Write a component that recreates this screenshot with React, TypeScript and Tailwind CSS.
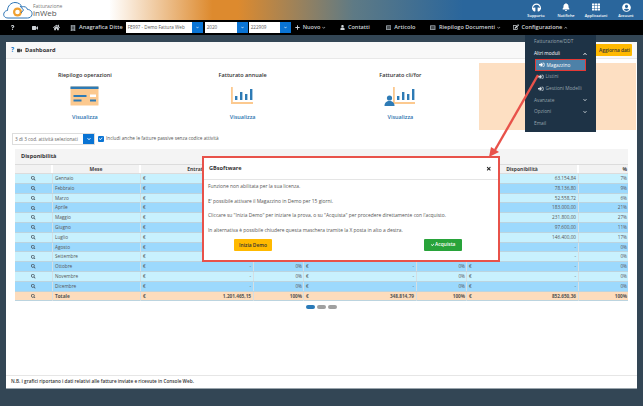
import React from "react";
import { FaHeadphones, FaBell, FaTh, FaUserCircle, FaVideo, FaHome, FaBuilding, FaPlus, FaUser, FaListAlt, FaEdit, FaSearch, FaCheck, FaTimes, FaSignInAlt, FaChevronDown, FaChevronUp, FaQuestion } from "react-icons/fa";

const font = { fontFamily: '"Open Sans", sans-serif' };

const months = [
  { name: "Gennaio", disp: "63.154,84", pct: "7%" },
  { name: "Febbraio", disp: "78.136,80", pct: "9%" },
  { name: "Marzo", disp: "52.558,72", pct: "6%" },
  { name: "Aprile", disp: "183.000,00", pct: "21%" },
  { name: "Maggio", disp: "231.800,00", pct: "27%" },
  { name: "Giugno", disp: "97.600,00", pct: "11%" },
  { name: "Luglio", disp: "146.400,00", pct: "17%" },
  { name: "Agosto", disp: "-", pct: "0%" },
  { name: "Settembre", disp: "-", pct: "0%" },
  { name: "Ottobre", disp: "-", pct: "0%" },
  { name: "Novembre", disp: "-", pct: "0%" },
  { name: "Dicembre", disp: "-", pct: "0%" },
];

const cols = "grid grid-cols-[38px_88px_113px_50px_113px_50px_112px_49px]";

function Logo() {
  return (
    <svg width="32" height="20" viewBox="0 0 32 20" fill="none">
      <path d="M6 18C2.5 18 1 15.5 2 13C2.8 11 4.5 10.5 5.5 10.5C5.5 6 9 2.5 13 2.5C16.5 2.5 19 4.5 20 7C22 6 25 7 25.5 9.5C28.5 9.5 30.5 12 30 14.5C29.5 17 27.5 18 25.5 18H6Z" stroke="#2e75b6" strokeWidth="1" />
      <circle cx="15.5" cy="12" r="4.5" fill="#f0a030" />
      <circle cx="15.5" cy="12" r="2.3" fill="#fff" />
      <path d="M18 6L21.5 10L19 13" stroke="#2e75b6" strokeWidth="1" />
    </svg>
  );
}

function Bars({ person }: { person?: boolean }) {
  return (
    <svg width="32" height="20" viewBox="0 0 32 20">
      <rect x={person ? 9 : 4} y="1" width="1.8" height="17" fill="#fcc98f" />
      <rect x={person ? 9 : 4} y="16" width={person ? 22 : 22} height="2" fill="#fcc98f" />
      <g fill="#2e7bb5" transform={person ? "translate(5 0)" : ""}>
        <rect x="8" y="10" width="2.4" height="4" />
        <rect x="13" y="6" width="2.4" height="8" />
        <rect x="18" y="8" width="2.4" height="6" />
        <rect x="23" y="3" width="2.4" height="11" />
      </g>
      {person && (
        <g fill="#2e7bb5">
          <circle cx="5.5" cy="12" r="2.6" />
          <path d="M0.5 20C0.5 16.5 2.5 15 5.5 15C8.5 15 10.5 16.5 10.5 20Z" />
        </g>
      )}
    </svg>
  );
}

function CardIcon() {
  return (
    <svg width="29" height="20" viewBox="0 0 29 20">
      <rect x="0.5" y="0.5" width="28" height="19" rx="0.5" fill="#fcc98f" />
      <rect x="0.5" y="0.5" width="28" height="2.5" fill="#2e7bb5" />
      <rect x="3.5" y="9" width="13" height="2" fill="#2e7bb5" />
      <rect x="3.5" y="13.5" width="8" height="2" fill="#2e7bb5" />
      <rect x="20" y="8.5" width="6" height="2.5" fill="#fff" />
      <rect x="20" y="13.5" width="6" height="2" fill="#2e7bb5" />
    </svg>
  );
}

function Summary({ title, icon }: { title: string; icon: React.ReactNode }) {
  return (
    <div className="flex flex-col items-center pt-[12px]">
      <div className="h-[9px] text-[5.5px] leading-[9px] font-semibold text-[#333]">{title}</div>
      <div className="mt-[6px] h-[20px] flex items-center">{icon}</div>
      <div className="mt-[7px] text-[5.5px] leading-[9px] font-semibold text-[#2f75b0]">Visualizza</div>
    </div>
  );
}

function Combo({ text, w }: { text: string; w: string }) {
  return (
    <div className={`flex h-[11px] ${w}`}>
      <div className="flex-1 bg-white text-[4.6px] leading-[11px] pl-[2px] text-[#555] whitespace-nowrap overflow-hidden">{text}</div>
      <div className="w-[11px] bg-[#0a74d4] flex items-center justify-center">
        <FaChevronDown className="text-white" size={3} />
      </div>
    </div>
  );
}

function NavItem({ icon, label, chevron, gap }: { icon: React.ReactNode; label: string; chevron?: "down" | "up"; gap: string }) {
  return (
    <div className={`flex items-center ${gap} text-[#cfd4d8]`}>
      {icon}
      <span className="ml-[3px] text-[5.6px] font-semibold whitespace-nowrap">{label}</span>
      {chevron === "down" && <FaChevronDown className="ml-[2px]" size={3.5} />}
      {chevron === "up" && <FaChevronUp className="ml-[2px]" size={3.5} />}
    </div>
  );
}

function TopIcon({ icon, label }: { icon: React.ReactNode; label: string }) {
  return (
    <div className="w-[30px] flex flex-col items-center text-white">
      <div className="h-[12px] flex items-center">{icon}</div>
      <div className="text-[3.9px] leading-[6px] font-semibold whitespace-nowrap">{label}</div>
    </div>
  );
}

function Row({ name, bg, entrate, entPct, uscite, uscPct, disp, pct, bold }: { name: string; bg: string; entrate?: string; entPct?: string; uscite?: string; uscPct?: string; disp: string; pct: string; bold?: boolean }) {
  const w = bold ? "font-bold" : "";
  return (
    <div className={`${cols} h-[9.8px] ${bg} border-b border-[#bcd4df] text-[4.7px] leading-[9px] text-[#555] ${w}`}>
      <div className="flex items-center justify-center border-r border-[#d5dfe3]">
        <FaSearch className="text-[#44505a]" size={4.5} />
      </div>
      <div className="pl-[2px] border-r border-[#d5dfe3]">{name}</div>
      <div className="flex justify-between px-[2px] border-r border-[#d5dfe3]"><span>€</span><span>{entrate}</span></div>
      <div className="text-right pr-[1px] border-r border-[#d5dfe3]">{entPct}</div>
      <div className="flex justify-between px-[2px] border-r border-[#d5dfe3]"><span>€</span><span>{uscite}</span></div>
      <div className="text-right pr-[1px] border-r border-[#d5dfe3]">{uscPct}</div>
      <div className="flex justify-between px-[2px] border-r border-[#d5dfe3]"><span>€</span><span>{disp}</span></div>
      <div className="text-right pr-[1px]">{pct}</div>
    </div>
  );
}

function MenuItem({ label, chevron, sub, active }: { label: string; chevron?: "down" | "up"; sub?: boolean; active?: boolean }) {
  return (
    <div className={`flex items-center h-[11.7px] text-[4.8px] ${sub ? "pl-[13px]" : "pl-[9px]"} pr-[9px] ${active ? "text-white" : "text-[#97a3ad]"}`}>
      {sub && <FaSignInAlt className="mr-[2px] text-[#d5dce2]" size={5.5} />}
      <span className="flex-1 whitespace-nowrap">{label}</span>
      {chevron === "down" && <FaChevronDown className="text-[#c8d0d6]" size={4} />}
      {chevron === "up" && <FaChevronUp className="text-white" size={4} />}
    </div>
  );
}

export default function App() {
  return (
    <div className="relative w-[643px] h-[406px] overflow-hidden bg-[#334655] flex flex-col" style={font}>
      {/* Header */}
      <div className="h-[20px] flex justify-between items-start bg-[linear-gradient(90deg,#ffffff_17%,#dd8a2e_33%,#dd8a2e_37%,#5e7a85_55%,#2a669c_72%,#2a669c_100%)]">
        <div className="flex items-center pl-[2px] h-[20px]">
          <Logo />
          <div className="-ml-[1px] flex flex-col">
            <span className="text-[5px] leading-[6px] text-[#777]">Fatturazione</span>
            <span className="text-[8px] leading-[8px] text-[#555]">inWeb</span>
          </div>
        </div>
        <div className="flex pr-[2px] pt-[1px]">
          <TopIcon icon={<FaHeadphones size={9} />} label="Supporto" />
          <TopIcon icon={<FaBell size={8} />} label="Notifiche" />
          <TopIcon icon={<FaTh size={8} />} label="Applicazioni" />
          <TopIcon icon={<FaUserCircle size={9} />} label="Account" />
        </div>
      </div>

      {/* Nav */}
      <div className="h-[15px] bg-black flex items-center">
        <FaQuestion className="ml-[10px] text-[#cfd4d8]" size={5} />
        <FaVideo className="ml-[17px] text-[#cfd4d8]" size={6} />
        <FaHome className="ml-[15px] text-[#cfd4d8]" size={7} />
        <FaBuilding className="ml-[10px] text-[#8c949a]" size={6} />
        <span className="ml-[3px] text-[5.6px] font-semibold text-[#cfd4d8] whitespace-nowrap">Anagrafica Ditte</span>
        <div className="ml-[3px]"><Combo text="FE997 - Demo Fattura Web" w="w-[77px]" /></div>
        <div className="ml-[2px]"><Combo text="2020" w="w-[43px]" /></div>
        <div className="ml-[1px]"><Combo text="222909" w="w-[42px]" /></div>
        <NavItem gap="ml-[4px]" icon={<FaPlus size={5} />} label="Nuovo" chevron="down" />
        <NavItem gap="ml-[14px]" icon={<FaUser size={5} />} label="Contatti" />
        <NavItem gap="ml-[16px]" icon={<FaListAlt className="text-[#8c949a]" size={5.5} />} label="Articolo" />
        <NavItem gap="ml-[15px]" icon={<FaListAlt className="text-[#8c949a]" size={5.5} />} label="Riepilogo Documenti" chevron="down" />
        <NavItem gap="ml-[12px]" icon={<FaEdit size={6} />} label="Configurazione" chevron="up" />
      </div>

      {/* Main */}
      <div className="px-[6px] pt-[7px]">
        <div className="h-[347px] bg-white flex flex-col border-b border-[#9aa5ad]">
          <div className="h-[17px] bg-[#f8f8f8] border-b border-[#e8e8e8] flex items-center justify-between pl-[5px] pr-[5px]">
            <div className="flex items-center text-[#333]">
              <span className="text-[6.5px] font-bold text-[#1b78c8]">?</span>
              <FaVideo className="ml-[3px] text-[#444]" size={5} />
              <span className="ml-[3px] text-[5.6px] font-bold">Dashboard</span>
            </div>
            <div className="h-[12px] w-[40px] rounded-[1px] bg-[#ffb900] text-[4.8px] font-semibold leading-[12px] text-right pr-[2px] text-[#333]">Aggiorna dati</div>
          </div>

          <div className="grid grid-cols-4 h-[71px]">
            <Summary title="Riepilogo operazioni" icon={<CardIcon />} />
            <Summary title="Fatturato annuale" icon={<Bars />} />
            <Summary title="Fatturato cli/for" icon={<Bars person />} />
            <div className="mt-[4px] mr-[1px] h-[67px] bg-[#fddfc2]" />
          </div>

          <div className="flex items-center h-[13px] pl-[6px] mt-[2px]">
            <div className="flex h-[12px] w-[83px] border border-[#ddd] bg-white">
              <div className="flex-1 text-[4.7px] leading-[10px] pl-[2px] text-[#666] whitespace-nowrap">3 di 3 cod. attività selezionati</div>
              <div className="w-[11px] bg-[#0a74d4] flex items-center justify-center"><FaChevronDown className="text-white" size={4} /></div>
            </div>
            <div className="ml-[3px] w-[6px] h-[6px] rounded-[1px] bg-[#0a74d4] flex items-center justify-center"><FaCheck className="text-white" size={3.5} /></div>
            <span className="ml-[2px] text-[4.7px] text-[#555] whitespace-nowrap">Includi anche le fatture passive senza codice attività</span>
          </div>

          <div className="mt-[4px] ml-[9px] w-[613px]">
            <div className="h-[15px] bg-[#f4f4f4] flex items-center pl-[6px] text-[5.6px] font-bold text-[#333]">Disponibilità</div>
            <div className={`${cols} h-[10px] bg-[#f2f2f2] border-y border-[#dcdcdc] text-[5px] leading-[8px] font-bold text-[#444]`}>
              <div className="border-r-2 border-white" />
              <div className="text-center border-r-2 border-white">Mese</div>
              <div className="text-center border-r-2 border-white">Entrate</div>
              <div className="text-right pr-[1px] border-r-2 border-white">%</div>
              <div className="text-center border-r-2 border-white">Uscite</div>
              <div className="text-right pr-[1px] border-r-2 border-white">%</div>
              <div className="text-center border-r-2 border-white">Disponibilità</div>
              <div className="text-right pr-[1px]">%</div>
            </div>
            {months.map((m, i) => (
              <Row
                key={m.name}
                name={m.name}
                bg={i % 2 === 0 ? "bg-[#c8f1fe]" : "bg-[#9cd9fd]"}
                entrate={i > 7 ? "-" : ""}
                entPct={i > 7 ? "0%" : ""}
                uscite={i > 7 ? "-" : ""}
                uscPct={i > 7 ? "0%" : ""}
                disp={m.disp}
                pct={m.pct}
              />
            ))}
            <Row name="Totale" bg="bg-[#fddcbc]" entrate="1.201.465,15" entPct="100%" uscite="348.814,79" uscPct="100%" disp="852.650,36" pct="100%" bold />
          </div>

          <div className="flex justify-center gap-[2px] mt-[4px]">
            <div className="w-[9px] h-[4px] rounded-full bg-[#2a7ab8]" />
            <div className="w-[9px] h-[4px] rounded-full bg-[#a0a0a0]" />
            <div className="w-[9px] h-[4px] rounded-full bg-[#a0a0a0]" />
          </div>

          <div className="mt-auto h-[13px] border-t border-[#e6e6e6] flex items-center pl-[5px] text-[4.7px] font-semibold text-[#333]">
            N.B. i grafici riportano i dati relativi alle fatture inviate e ricevute in Console Web.
          </div>
        </div>
      </div>

      {/* Configurazione menu */}
      <div className="absolute left-[525px] top-[35px] w-[71px] h-[97px] bg-[#1e3346] pt-[1px]">
        <MenuItem label="Fatturazione/DDT" />
        <MenuItem label="Altri moduli" chevron="up" active />
        <div className="mx-[10px] border border-[#e53935] bg-[#4d81a8]">
          <div className="flex items-center h-[9.7px] pl-[3px] text-[4.8px] text-white">
            <FaSignInAlt className="mr-[2px]" size={5.5} />
            Magazzino
          </div>
        </div>
        <MenuItem label="Listini" sub />
        <MenuItem label="Gestioni Modelli" sub />
        <MenuItem label="Avanzate" chevron="down" />
        <MenuItem label="Opzioni" chevron="down" />
        <MenuItem label="Email" />
      </div>

      {/* Arrow */}
      <svg className="absolute left-0 top-0 pointer-events-none" width="643" height="406">
        <line x1="538" y1="75" x2="495" y2="150" stroke="#e8524a" strokeWidth="2.4" />
        <polygon points="489,157 491,147 499,152" fill="#e8524a" />
      </svg>

      {/* Modal */}
      <div className="absolute left-[202px] top-[156px] w-[298px] h-[106px] bg-white border-2 border-[#e8524a] flex flex-col">
        <div className="h-[22px] border-b border-[#e5e5e5] flex items-center justify-between pl-[5px] pr-[7px]">
          <span className="text-[5.6px] font-bold text-[#333]">GBsoftware</span>
          <FaTimes className="text-[#222]" size={5.5} />
        </div>
        <div className="pl-[4px] pt-[2px] text-[4.9px] text-[#555] flex flex-col gap-[5.6px] leading-[9px] whitespace-nowrap">
          <div>Funzione non abilitata per la sua licenza.</div>
          <div>E' possibile attivare il Magazzino in Demo per 15 giorni.</div>
          <div>Cliccare su "Inizia Demo" per iniziare la prova, o su "Acquista" per procedere direttamente con l'acquisto.</div>
          <div>In alternativa è possibile chiudere questa maschera tramite la X posta in alto a destra.</div>
        </div>
        <div className="flex justify-between pl-[30px] pr-[36px] mt-[4px]">
          <div className="w-[38px] h-[12px] rounded-[1px] bg-[#ffb900] text-center text-[4.9px] font-semibold leading-[12px] text-[#333]">Inizia Demo</div>
          <div className="w-[38px] h-[12px] rounded-[1px] bg-[#28a33a] flex items-center justify-center text-[4.9px] font-semibold text-white">
            <FaCheck className="mr-[1px]" size={3.5} />
            Acquista
          </div>
        </div>
      </div>
    </div>
  );
}
